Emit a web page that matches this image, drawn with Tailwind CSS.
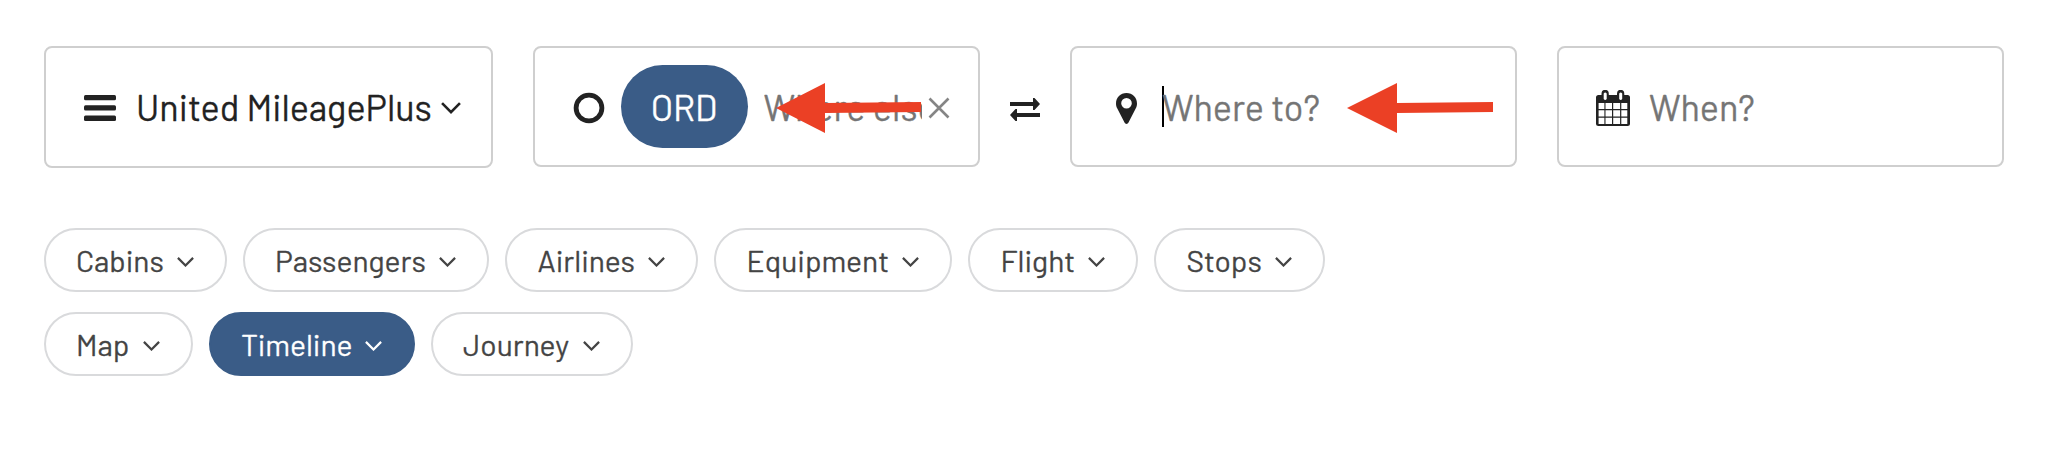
<!DOCTYPE html>
<html lang="en">
<head>
<meta charset="utf-8">
<title>Flight search</title>
<script src="https://cdn.jsdelivr.net/npm/@tailwindcss/browser@4"></script>
</head>
<body class="bg-white font-['Barlow','Roboto',sans-serif] text-[#222] whitespace-nowrap [-webkit-text-stroke:0.3px_currentColor]">
<svg class="hidden"><symbol id="chev" viewBox="0.5 0.5 19 11.200"><path d="M1.500 1.500 10 10l8.500-8.500" fill="none" stroke="currentColor" stroke-width="2.500"/></symbol></svg>
<main class="h-[450px] w-[2062px] overflow-hidden pl-[44px] pt-[46px]">
  <div class="flex h-[122px] items-start text-[36px] leading-[122px]">
    <button class="flex h-[122px] w-[449px] items-center rounded-lg border-2 border-[#cfcfcf] pl-[38px] pr-[30px]">
      <svg class="mt-[2px] h-[26px] w-8 shrink-0" viewBox="0 0 32 26" fill="currentColor"><rect width="32" height="5.300" rx="1.500"/><rect y="10.300" width="32" height="5.300" rx="1.500"/><rect y="20.600" width="32" height="5.300" rx="1.500"/></svg>
      <span class="ml-[20px]">United MileagePlus</span>
      <svg class="ml-auto mt-[2px] h-3 w-5 shrink-0"><use href="#chev"/></svg>
    </button>

    <div class="relative ml-10 flex h-[121px] w-[447px] items-center rounded-lg border-2 border-[#cfcfcf] pl-[38px]">
      <svg class="mt-[3px] size-[32px] shrink-0" viewBox="0 0 32 32"><circle cx="16" cy="16" r="12.900" fill="none" stroke="currentColor" stroke-width="4.800"/></svg>
      <span class="ml-[16px] flex h-[83px] w-[127px] shrink-0 items-center justify-center rounded-full bg-[#3a5c87] pr-px text-white"><span>ORD</span></span>
      <span class="ml-[15.5px] w-[158.5px] shrink-0 overflow-hidden text-[#757575]">Where else?</span>
      <svg class="ml-[6px] mt-[2px] size-[22px] shrink-0" viewBox="0 0 22 22"><path d="M1.500 1.500l19 19M20.500 1.500l-19 19" stroke="#858585" stroke-width="2.600"/></svg>
      <svg class="absolute left-[241px] top-[35px] h-[50px] w-[146px]" viewBox="0 0 146 50" fill="#eb4025"><path d="M0 25 49 0v20l96-1v10l-96 1v20z"/></svg>
    </div>

    <div class="flex h-[122px] w-[90px] items-center justify-center">
      <svg class="mt-1 h-[23px] w-[30px]" viewBox="0 0 30 23" fill="currentColor"><path d="M0 4h23V0h1.500L30 6l-5.500 6H23V8H0zM30 15v4H7v4H5.500L0 17l5.500-6H7v4z"/></svg>
    </div>

    <div class="relative flex h-[121px] w-[447px] items-center rounded-lg border-2 border-[#cfcfcf] pl-[43.5px]">
      <svg class="mt-[3px] h-[31px] w-[21px] shrink-0" viewBox="0 0 21 31"><path fill="currentColor" fill-rule="evenodd" d="M10.500 0C4.500 0 0 4.600 0 10.400c0 2 .5 3.600 1.300 5.200l7.200 14c.8 1.700 3.200 1.700 4 0l7.200-14c.8-1.600 1.300-3.200 1.300-5.200C21 4.600 16.500 0 10.500 0zm0 5a5.300 5.300 0 1 1 0 10.600 5.300 5.300 0 0 1 0-10.600z"/></svg>
      <span class="ml-[25.5px] h-[41px] w-[2px] shrink-0 bg-black"></span>
      <span class="-ml-[2px] text-[#757575]">Where to?</span>
      <svg class="absolute left-[275px] top-[35px] h-[50px] w-[146px]" viewBox="0 0 146 50" fill="#eb4025"><path d="M0 25 50 0v20l96-1v10l-96 1v20z"/></svg>
    </div>

    <div class="ml-10 flex h-[121px] w-[447px] items-center rounded-lg border-2 border-[#cfcfcf] pl-[37px]">
      <svg class="mt-[3px] h-9 w-[34px] shrink-0" viewBox="0 0 34 36"><path fill="currentColor" fill-rule="evenodd" d="M2.500 5H5.500V4a3.500 4 0 0 1 7.300 0v1h8.200V4a3.500 4 0 0 1 7.300 0v1h3.200A2.500 2.500 0 0 1 34 7.500v26A2.500 2.500 0 0 1 31.500 36h-29A2.500 2.500 0 0 1 0 33.500v-26A2.500 2.500 0 0 1 2.500 5zM7.700 3.500V9q1.500 1.800 3 0V3.500q-1.500-2-3 0zM23.200 3.500V9q1.500 1.800 3 0V3.500q-1.500-2-3 0zM2.600 13v6h5.800v-6zM9.500 13v6h6.500v-6zM17.200 13v6h6.900v-6zM25.300 13v6h6v-6zM2.600 20.200v6.300h5.800v-6.300zM9.500 20.200v6.300h6.500v-6.300zM17.200 20.200v6.300h6.900v-6.300zM25.300 20.200v6.300h6v-6.300zM2.600 27.700V34h5.800v-6.300zM9.500 27.700V34h6.500v-6.300zM17.200 27.700V34h6.900v-6.300zM25.300 27.700V34h6v-6.300z"/></svg>
      <span class="ml-[19px] text-[#757575]">When?</span>
    </div>
  </div>

  <div class="mt-[60px] flex gap-4 text-[30px] leading-[60px] text-[#444]">
    <button class="flex h-16 w-[183px] items-center rounded-full border-2 border-[#d9dadc] pl-[30px] pr-[31px]"><span>Cabins</span><svg class="ml-auto mt-[3px] h-[10px] w-[17px] shrink-0"><use href="#chev"/></svg></button>
    <button class="flex h-16 w-[246px] items-center rounded-full border-2 border-[#d9dadc] pl-[30px] pr-[31px]"><span>Passengers</span><svg class="ml-auto mt-[3px] h-[10px] w-[17px] shrink-0"><use href="#chev"/></svg></button>
    <button class="flex h-16 w-[193px] items-center rounded-full border-2 border-[#d9dadc] pl-[30.5px] pr-[31px]"><span>Airlines</span><svg class="ml-auto mt-[3px] h-[10px] w-[17px] shrink-0"><use href="#chev"/></svg></button>
    <button class="flex h-16 w-[238px] items-center rounded-full border-2 border-[#d9dadc] pl-[30.5px] pr-[31px]"><span>Equipment</span><svg class="ml-auto mt-[3px] h-[10px] w-[17px] shrink-0"><use href="#chev"/></svg></button>
    <button class="flex h-16 w-[170px] items-center rounded-full border-2 border-[#d9dadc] pl-[30.5px] pr-[31px]"><span>Flight</span><svg class="ml-auto mt-[3px] h-[10px] w-[17px] shrink-0"><use href="#chev"/></svg></button>
    <button class="flex h-16 w-[171px] items-center rounded-full border-2 border-[#d9dadc] pl-[30.5px] pr-[31px]"><span>Stops</span><svg class="ml-auto mt-[3px] h-[10px] w-[17px] shrink-0"><use href="#chev"/></svg></button>
  </div>
  <div class="mt-5 flex gap-4 text-[30px] leading-[60px] text-[#444]">
    <button class="flex h-16 w-[149px] items-center rounded-full border-2 border-[#d9dadc] pl-[30px] pr-[31px]"><span>Map</span><svg class="ml-auto mt-[3px] h-[10px] w-[17px] shrink-0"><use href="#chev"/></svg></button>
    <button class="flex h-16 w-[206px] items-center rounded-full border-2 border-[#3a5c87] bg-[#3a5c87] pl-[30px] pr-[31px] text-white"><span>Timeline</span><svg class="ml-auto mt-[3px] h-[10px] w-[17px] shrink-0"><use href="#chev"/></svg></button>
    <button class="flex h-16 w-[202px] items-center rounded-full border-2 border-[#d9dadc] pl-[30px] pr-[31px]"><span>Journey</span><svg class="ml-auto mt-[3px] h-[10px] w-[17px] shrink-0"><use href="#chev"/></svg></button>
  </div>
</main>
</body>
</html>
